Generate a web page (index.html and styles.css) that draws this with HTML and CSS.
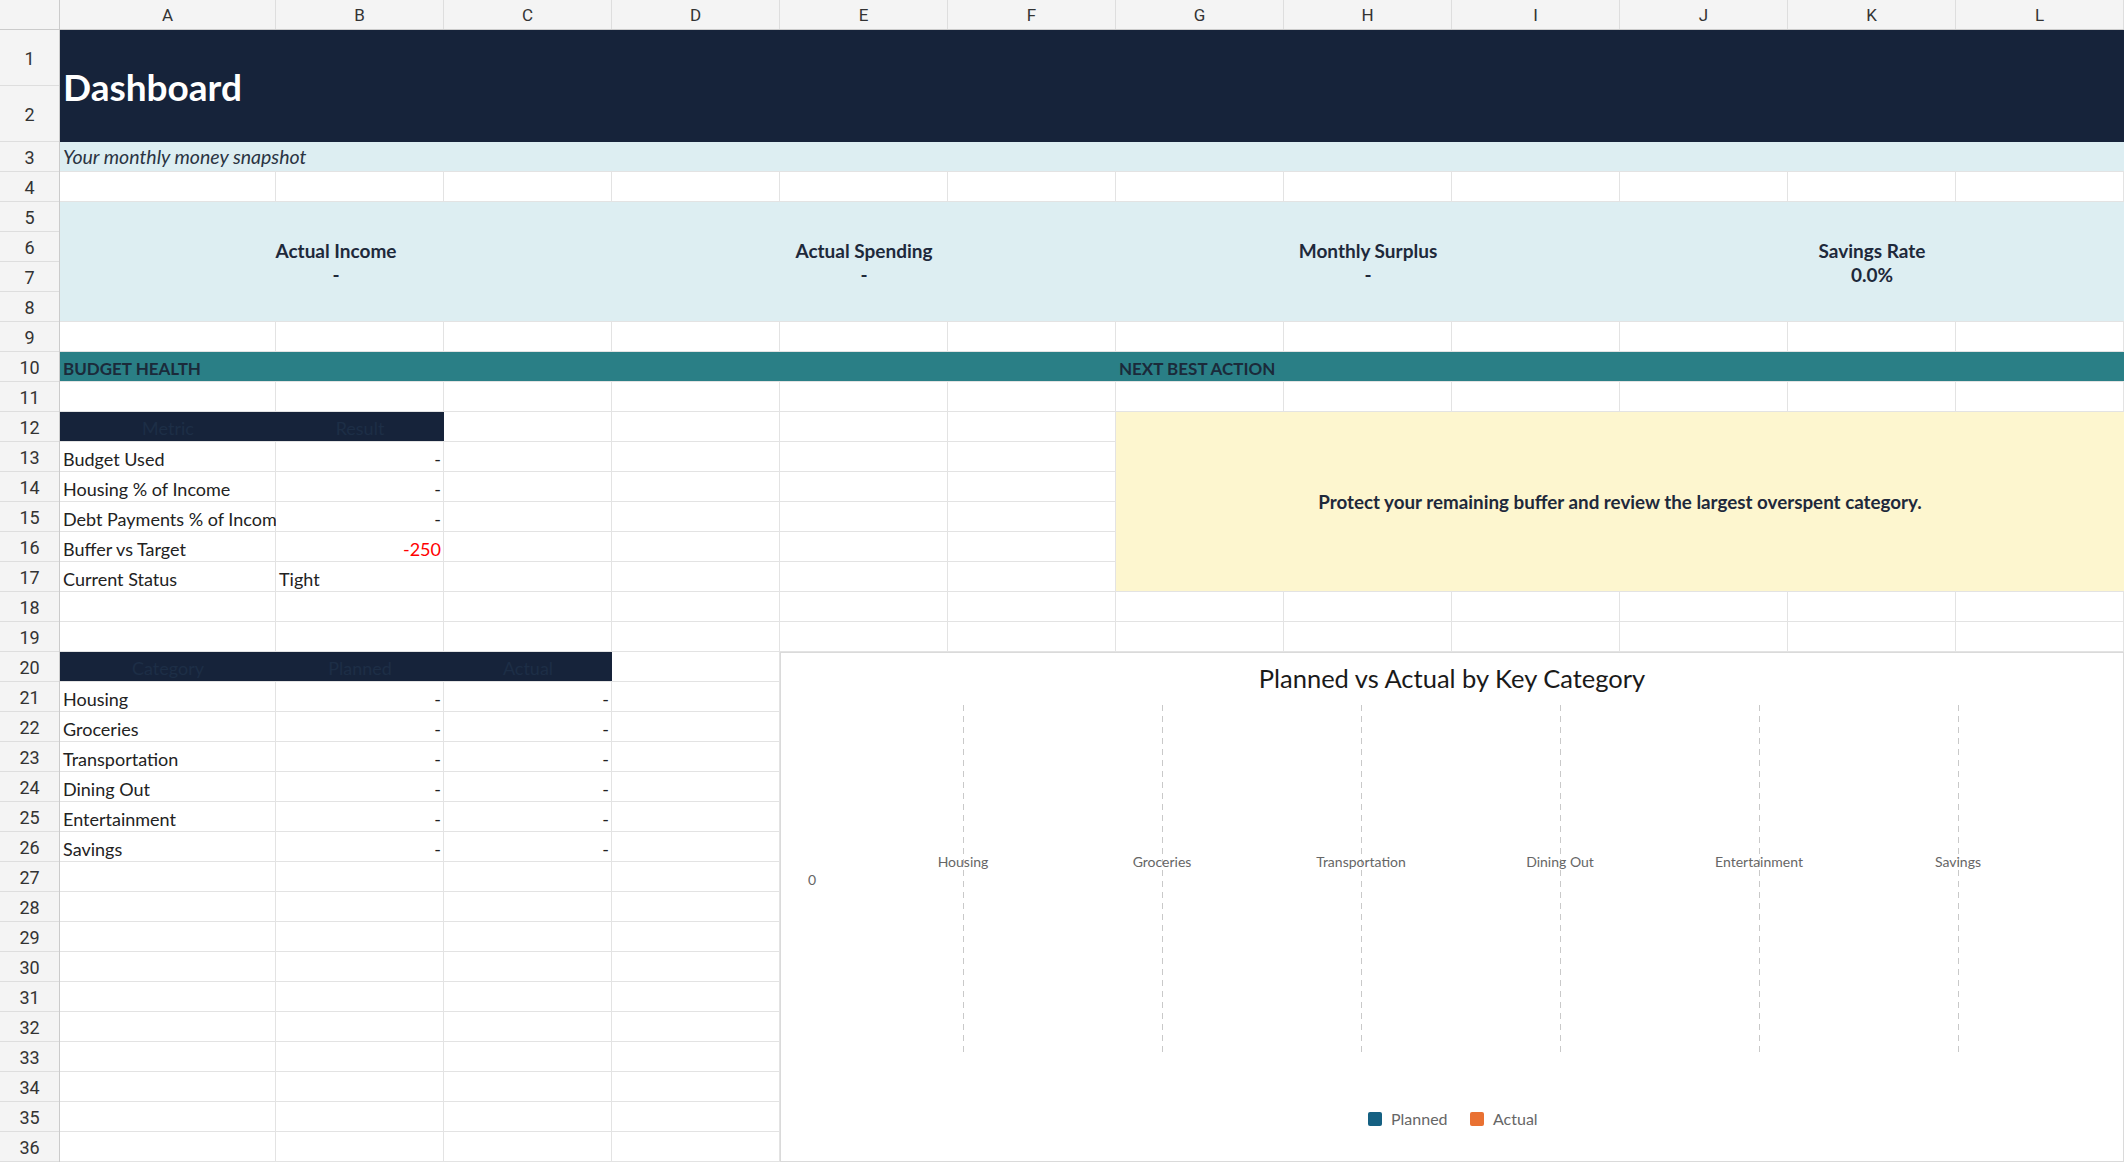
FILE: index.html
```html
<!DOCTYPE html>
<html lang="en">
<head>
    <meta charset="UTF-8">
    <title>Dashboard</title>
    <link rel="stylesheet" href="styles.css">
</head>
<body>
    <div class="app">
        <div class="corner"></div>

        <div class="col-heads">
            <div>A</div><div>B</div><div>C</div><div>D</div><div>E</div><div>F</div>
            <div>G</div><div>H</div><div>I</div><div>J</div><div>K</div><div>L</div>
        </div>

        <div class="row-heads">
            <div>1</div><div>2</div><div>3</div><div>4</div><div>5</div><div>6</div>
            <div>7</div><div>8</div><div>9</div><div>10</div><div>11</div><div>12</div>
            <div>13</div><div>14</div><div>15</div><div>16</div><div>17</div><div>18</div>
            <div>19</div><div>20</div><div>21</div><div>22</div><div>23</div><div>24</div>
            <div>25</div><div>26</div><div>27</div><div>28</div><div>29</div><div>30</div>
            <div>31</div><div>32</div><div>33</div><div>34</div><div>35</div><div>36</div>
        </div>

        <div class="sheet">
            <!-- header -->
            <div class="cell title">Dashboard</div>
            <div class="cell subtitle">Your monthly money snapshot</div>

            <!-- kpis -->
            <div class="cell kpi kpi-1"><span>Actual Income</span><span>-</span></div>
            <div class="cell kpi kpi-2"><span>Actual Spending</span><span>-</span></div>
            <div class="cell kpi kpi-3"><span>Monthly Surplus</span><span>-</span></div>
            <div class="cell kpi kpi-4"><span>Savings Rate</span><span>0.0%</span></div>

            <!-- section bars -->
            <div class="cell section section-left">BUDGET HEALTH</div>
            <div class="cell section section-right">NEXT BEST ACTION</div>

            <!-- budget health table -->
            <div class="cell head r12 ca">Metric</div>
            <div class="cell head r12 cb">Result</div>

            <div class="cell r13 ca">Budget Used</div>
            <div class="cell num r13 cb">-</div>
            <div class="cell r14 ca">Housing % of Income</div>
            <div class="cell num r14 cb">-</div>
            <div class="cell r15 ca">Debt Payments % of Income</div>
            <div class="cell num r15 cb">-</div>
            <div class="cell r16 ca">Buffer vs Target</div>
            <div class="cell num neg r16 cb">-250</div>
            <div class="cell r17 ca">Current Status</div>
            <div class="cell r17 cb">Tight</div>

            <!-- next best action -->
            <div class="cell action">Protect your remaining buffer and review the largest overspent category.</div>

            <!-- category table -->
            <div class="cell head r20 ca">Category</div>
            <div class="cell head r20 cb">Planned</div>
            <div class="cell head r20 cc">Actual</div>

            <div class="cell r21 ca">Housing</div>
            <div class="cell num r21 cb">-</div>
            <div class="cell num r21 cc">-</div>
            <div class="cell r22 ca">Groceries</div>
            <div class="cell num r22 cb">-</div>
            <div class="cell num r22 cc">-</div>
            <div class="cell r23 ca">Transportation</div>
            <div class="cell num r23 cb">-</div>
            <div class="cell num r23 cc">-</div>
            <div class="cell r24 ca">Dining Out</div>
            <div class="cell num r24 cb">-</div>
            <div class="cell num r24 cc">-</div>
            <div class="cell r25 ca">Entertainment</div>
            <div class="cell num r25 cb">-</div>
            <div class="cell num r25 cc">-</div>
            <div class="cell r26 ca">Savings</div>
            <div class="cell num r26 cb">-</div>
            <div class="cell num r26 cc">-</div>

            <!-- chart -->
            <div class="chart">
                <svg viewBox="0 0 1342 508" width="1342" height="508">
                    <text class="chart-title" x="671" y="35" text-anchor="middle">Planned vs Actual by Key Category</text>

                    <g class="grid-lines">
                        <line x1="182.5" y1="52" x2="182.5" y2="401"/>
                        <line x1="381.5" y1="52" x2="381.5" y2="401"/>
                        <line x1="580.5" y1="52" x2="580.5" y2="401"/>
                        <line x1="779.5" y1="52" x2="779.5" y2="401"/>
                        <line x1="978.5" y1="52" x2="978.5" y2="401"/>
                        <line x1="1177.5" y1="52" x2="1177.5" y2="401"/>
                    </g>

                    <g class="axis-labels" text-anchor="middle">
                        <text x="182" y="214">Housing</text>
                        <text x="381" y="214">Groceries</text>
                        <text x="580" y="214">Transportation</text>
                        <text x="779" y="214">Dining Out</text>
                        <text x="978" y="214">Entertainment</text>
                        <text x="1177" y="214">Savings</text>
                    </g>
                    <text class="axis-labels" x="27" y="232">0</text>

                    <g class="legend">
                        <rect x="587" y="459" width="14" height="14" rx="2" fill="#156082"/>
                        <text x="610" y="472">Planned</text>
                        <rect x="689" y="459" width="14" height="14" rx="2" fill="#e97132"/>
                        <text x="712" y="472">Actual</text>
                    </g>
                </svg>
            </div>
        </div>
    </div>
</body>
</html>
```

FILE: styles.css
```css
* {
    box-sizing: border-box;
}

body {
    margin: 0;
    font-family: Lato, "Noto Sans", sans-serif;
    background-color: #ffffff;
}

.app {
    display: grid;
    grid-template-columns: 60px 2064px;
    grid-template-rows: 30px 1132px;
    width: 2124px;
    height: 1162px;
    overflow: hidden;
}

/* headers */
.corner {
    background-color: #f4f4f4;
    border-right: 1px solid #cbcbcb;
    border-bottom: 1px solid #cbcbcb;
}

.col-heads {
    display: grid;
    grid-template-columns: 216px repeat(11, 168px);
    background-color: #f4f4f4;
    border-bottom: 1px solid #cbcbcb;
}

.col-heads div {
    display: flex;
    align-items: center;
    justify-content: center;
    border-right: 1px solid #dedede;
    font-family: Roboto, "Liberation Sans", sans-serif;
    font-size: 17px;
    color: #333333;
}

.row-heads {
    display: grid;
    grid-template-rows: 56px 56px repeat(34, 30px);
    background-color: #f4f4f4;
    border-right: 1px solid #cbcbcb;
}

.row-heads div {
    display: flex;
    align-items: center;
    justify-content: center;
    padding-top: 2px;
    border-bottom: 1px solid #dedede;
    font-family: Roboto, "Liberation Sans", sans-serif;
    font-size: 18px;
    color: #333333;
}

/* sheet body with grid lines */
.sheet {
    display: grid;
    grid-template-columns: 216px repeat(11, 168px);
    grid-template-rows: 56px 56px repeat(34, 30px);
    background-color: #ffffff;
    background-image:
        linear-gradient(to right, transparent 215px, #e3e3e3 215px, #e3e3e3 216px, transparent 216px),
        repeating-linear-gradient(to right, transparent 0, transparent 167px, #e3e3e3 167px, #e3e3e3 168px),
        repeating-linear-gradient(to bottom, transparent 0, transparent 29px, #e3e3e3 29px, #e3e3e3 30px);
    background-position: 0 0, 216px 0, 0 112px;
    background-repeat: no-repeat;
}

.cell {
    display: flex;
    align-items: flex-end;
    padding: 0 3px 2px;
    font-size: 18px;
    color: #222222;
    white-space: nowrap;
    overflow: hidden;
}

.num {
    justify-content: flex-end;
}

.neg {
    color: #ff0000;
}

.ca { grid-column: 1; }
.cb { grid-column: 2; }
.cc { grid-column: 3; }

.r12 { grid-row: 12; }
.r13 { grid-row: 13; }
.r14 { grid-row: 14; }
.r15 { grid-row: 15; }
.r16 { grid-row: 16; }
.r17 { grid-row: 17; }
.r20 { grid-row: 20; }
.r21 { grid-row: 21; }
.r22 { grid-row: 22; }
.r23 { grid-row: 23; }
.r24 { grid-row: 24; }
.r25 { grid-row: 25; }
.r26 { grid-row: 26; }

.title {
    grid-column: 1 / -1;
    grid-row: 1 / 3;
    align-items: center;
    padding-bottom: 0;
    background-color: #16233a;
    color: #ffffff;
    font-size: 37px;
    font-weight: 700;
}

.subtitle {
    grid-column: 1 / -1;
    grid-row: 3;
    padding-bottom: 3px;
    background-color: #ddeef2;
    border-bottom: 1px solid #e3e3e3;
    font-size: 19.5px;
    font-style: italic;
    color: #2a3442;
}

.kpi {
    grid-row: 5 / 9;
    flex-direction: column;
    align-items: center;
    justify-content: center;
    gap: 1px;
    padding: 1px 0 0;
    background-color: #ddeef2;
    border-bottom: 1px solid #e3e3e3;
    font-size: 19px;
    font-weight: 700;
    color: #1e293b;
}

.kpi-1 { grid-column: 1 / 4; }
.kpi-2 { grid-column: 4 / 7; }
.kpi-3 { grid-column: 7 / 10; }
.kpi-4 { grid-column: 10 / 13; }

.section {
    grid-row: 10;
    background-color: #2a7f86;
    border-bottom: 1px solid #e3e3e3;
    font-size: 17px;
    font-weight: 700;
    color: #1b2a3a;
}

.section-left { grid-column: 1 / 7; }
.section-right { grid-column: 7 / 13; }

.head {
    justify-content: center;
    background-color: #16233a;
    border-bottom: 1px solid #e3e3e3;
    color: #1d2e46;
}

.action {
    grid-column: 7 / 13;
    grid-row: 12 / 18;
    align-items: center;
    justify-content: center;
    padding: 0;
    background-color: #fdf6cf;
    border-bottom: 1px solid #e3e3e3;
    font-size: 18.8px;
    font-weight: 700;
    color: #1e293b;
}

/* chart */
.chart {
    grid-column: 5 / 13;
    grid-row: 20 / 37;
    background-color: #ffffff;
    border: 1px solid #dadada;
}

.chart svg {
    display: block;
}

.chart-title {
    font-family: Lato, sans-serif;
    font-size: 25.5px;
    fill: #1a1a1a;
}

.grid-lines line {
    stroke: #c9c9c9;
    stroke-width: 1;
    stroke-dasharray: 6 5;
}

.axis-labels {
    font-family: Lato, sans-serif;
    font-size: 14px;
    fill: #666666;
}

.legend text {
    font-family: Lato, sans-serif;
    font-size: 16px;
    fill: #666666;
}
```
